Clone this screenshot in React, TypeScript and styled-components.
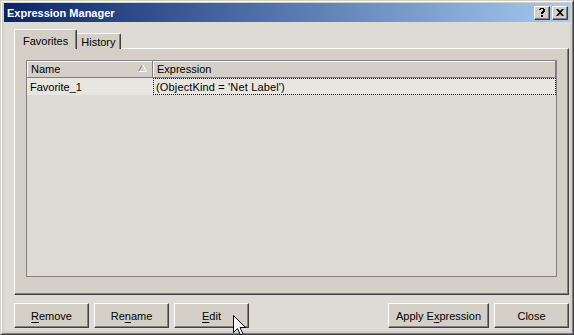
import React from 'react';
import styled, { createGlobalStyle } from 'styled-components';

const GlobalStyle = createGlobalStyle`
    body {
        margin: 0;
        font-family: "Liberation Sans", Arial, sans-serif;
        font-size: 11px;
        color: #000;
    }
`;

const WindowFrame = styled.div`
    position: relative;
    width: 574px;
    height: 335px;
    box-sizing: border-box;
    border: 1px solid;
    border-color: #d4d0c8 #404040 #404040 #d4d0c8;
    background: #d4d0c8;
`;

const WindowInner = styled.div`
    height: 100%;
    box-sizing: border-box;
    border: 1px solid;
    border-color: #ffffff #808080 #808080 #ffffff;
    padding: 1px 2px 2px 2px;
    display: flex;
    flex-direction: column;
`;

const TitleBar = styled.div`
    height: 19px;
    flex-shrink: 0;
    display: flex;
    align-items: center;
    justify-content: space-between;
    padding: 0 2px 0 3px;
    background: linear-gradient(to right, #0a246a, #a6caf0);
`;

const Title = styled.span`
    color: #fff;
    font-weight: bold;
    font-size: 11px;
    padding-top: 1px;
`;

const TitleButtons = styled.div`
    display: flex;
    gap: 2px;
`;

const TitleButton = styled.div`
    width: 16px;
    height: 14px;
    box-sizing: border-box;
    background: #d4d0c8;
    border: 1px solid;
    border-color: #ffffff #404040 #404040 #ffffff;
    box-shadow: inset -1px -1px #808080;
    display: flex;
    align-items: center;
    justify-content: center;
`;

const Body = styled.div`
    flex: 1;
    display: flex;
    flex-direction: column;
    background: #dedbd6;
    padding: 8px 1px 3px 10px;
`;

const TabRow = styled.div`
    display: flex;
    align-items: flex-end;
    height: 19px;
    position: relative;
    z-index: 1;
    margin-bottom: -1px;
`;

const Tab = styled.div<{ $active?: boolean }>`
    box-sizing: border-box;
    height: ${p => (p.$active ? '20px' : '16px')};
    padding: ${p => (p.$active ? '2px 8px 0 8px' : '1px 5px 0 4px')};
    background: #d4d0c8;
    border-top: 1px solid #fff;
    border-left: ${p => (p.$active ? '1px solid #fff' : 'none')};
    border-right: 1px solid #404040;
    box-shadow: inset -1px 0 #808080;
    border-radius: 2px 2px 0 0;
    display: flex;
    align-items: center;
    font-size: 11px;
`;

const Panel = styled.div`
    flex: 1;
    display: flex;
    flex-direction: column;
    background: #d4d0c8;
    border: 1px solid;
    border-color: #ffffff #404040 #404040 #ffffff;
    box-shadow: inset -1px -1px #808080;
    padding: 11px 11px 17px 11px;
`;

const ListView = styled.div`
    flex: 1;
    background: #dedbd6;
    border: 1px solid #808080;
    display: flex;
    flex-direction: column;
`;

const HeaderRow = styled.div`
    display: flex;
    height: 17px;
    background: #d4d0c8;
    box-sizing: border-box;
    border-bottom: 1px solid #808080;
`;

const HeaderCell = styled.div<{ $width?: number }>`
    position: relative;
    ${p => (p.$width ? `width: ${p.$width}px;` : 'flex: 1;')}
    box-sizing: border-box;
    padding-left: 4px;
    display: flex;
    align-items: center;
    border-right: 1px solid #808080;
    box-shadow: inset 1px 1px #fff;
`;

const SortArrow = styled.svg`
    position: absolute;
    left: 111px;
    top: 3px;
`;

const Row = styled.div`
    display: flex;
    height: 17px;
`;

const NameCell = styled.div`
    width: 126px;
    box-sizing: border-box;
    padding-left: 3px;
    display: flex;
    align-items: center;
    background: #e9e6e1;
`;

const ExprCell = styled.div`
    flex: 1;
    box-sizing: border-box;
    padding-left: 2px;
    display: flex;
    align-items: center;
    background: #e9e6e1;
    border: 1px dotted #000;
    letter-spacing: 0.15px;
`;

const ButtonRow = styled.div`
    display: flex;
    gap: 5px;
    margin-top: 8px;
    height: 25px;
`;

const Spacer = styled.div`
    flex: 1;
`;

const Button = styled.div<{ $width?: number }>`
    width: ${p => p.$width ?? 75}px;
    height: 25px;
    box-sizing: border-box;
    background: #d4d0c8;
    border: 1px solid;
    border-color: #ffffff #404040 #404040 #ffffff;
    box-shadow: inset -1px -1px #808080;
    display: flex;
    align-items: center;
    justify-content: center;
    font-size: 11px;
    u {
        text-decoration: underline;
        text-underline-offset: 2px;
    }
`;

const Cursor = styled.svg`
    position: absolute;
    left: 232px;
    top: 314px;
`;

export default function App(): JSX.Element {
    return (
        <>
            <GlobalStyle />
            <WindowFrame>
                <WindowInner>
                    <TitleBar>
                        <Title>Expression Manager</Title>
                        <TitleButtons>
                            <TitleButton>
                                <svg width="8" height="9" viewBox="0 0 8 9">
                                    <path d="M1 1h1V0h4v1h1v3H6v1H5v1H3V4h1V3h1V1H3v1H1z" fill="#000" />
                                    <rect x="3" y="7" width="2" height="2" fill="#000" />
                                </svg>
                            </TitleButton>
                            <TitleButton>
                                <svg width="8" height="7" viewBox="0 0 8 7">
                                    <path d="M0 0h2l2 2 2-2h2L5 3.5 8 7H6L4 5 2 7H0l3-3.5z" fill="#000" />
                                </svg>
                            </TitleButton>
                        </TitleButtons>
                    </TitleBar>
                    <Body>
                        <TabRow>
                            <Tab $active>Favorites</Tab>
                            <Tab>History</Tab>
                        </TabRow>
                        <Panel>
                            <ListView>
                                <HeaderRow>
                                    <HeaderCell $width={126}>
                                        Name
                                        <SortArrow width="9" height="8" viewBox="0 0 9 8">
                                            <path d="M0.5 7.5L4.5 0.5" stroke="#808080" fill="none" />
                                            <path d="M4.5 0.5L8.5 7.5H0.5" stroke="#ffffff" fill="none" />
                                        </SortArrow>
                                    </HeaderCell>
                                    <HeaderCell>Expression</HeaderCell>
                                </HeaderRow>
                                <Row>
                                    <NameCell>Favorite_1</NameCell>
                                    <ExprCell>(ObjectKind = 'Net Label')</ExprCell>
                                </Row>
                            </ListView>
                        </Panel>
                        <ButtonRow>
                            <Button><u>R</u>emove</Button>
                            <Button>Re<u>n</u>ame</Button>
                            <Button><u>E</u>dit</Button>
                            <Spacer />
                            <Button $width={101}>Apply E<u>x</u>pression</Button>
                            <Button>Close</Button>
                        </ButtonRow>
                    </Body>
                </WindowInner>
                <Cursor width="13" height="21" viewBox="0 0 13 21">
                    <path d="M0.5 0.5V17.5L4.5 13.5L7.5 20L10 19L7 12.5H12.5Z" fill="#fff" stroke="#000" />
                </Cursor>
            </WindowFrame>
        </>
    );
}
